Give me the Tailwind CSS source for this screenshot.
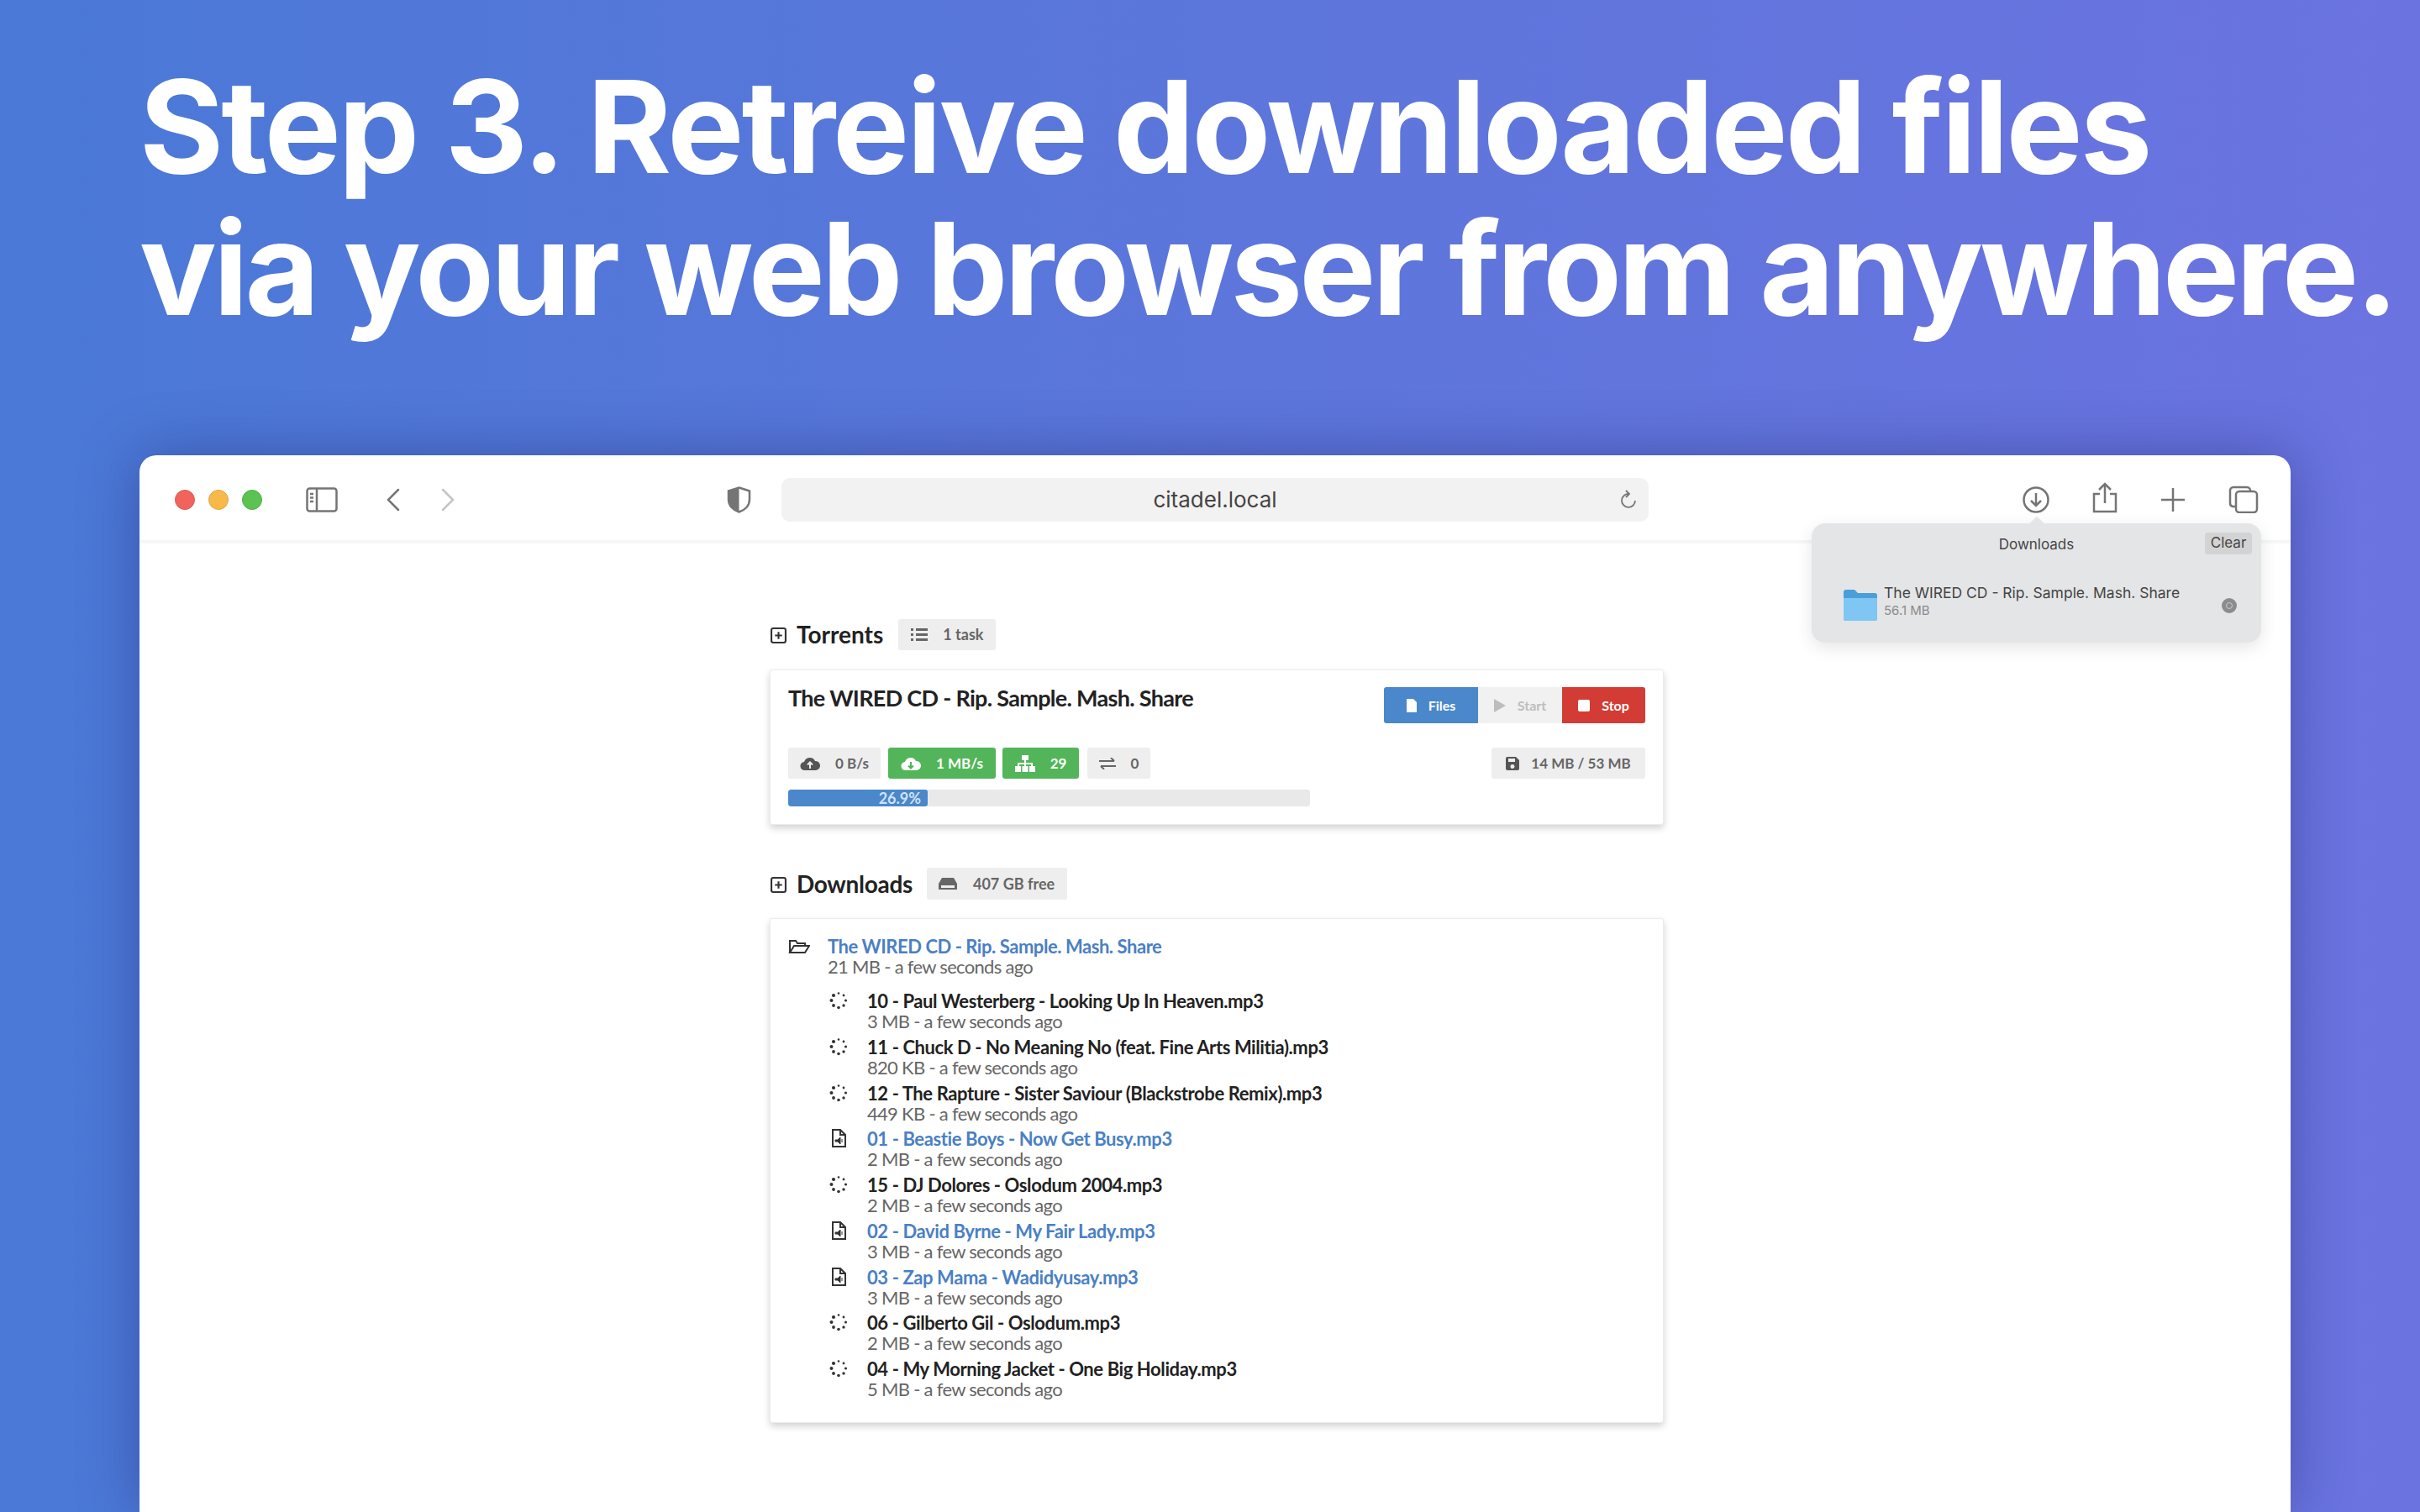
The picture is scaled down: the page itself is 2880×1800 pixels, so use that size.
<!DOCTYPE html>
<html lang="en">
<head>
  <meta charset="UTF-8" />
  <title>Step 3. Retreive downloaded files</title>
  <script src="https://cdn.jsdelivr.net/npm/@tailwindcss/browser@4"></script>
</head>
<body class="w-[2880px] h-[1800px] overflow-hidden bg-gradient-to-r from-[#4a79d7] to-[#6b73e0] font-['Inter',sans-serif]">

  <!-- svg symbols -->
  <svg class="hidden">
    <symbol id="plus-square" viewBox="0 0 18 18"><rect x="1" y="1" width="16" height="16" rx="2" fill="none" stroke="currentColor" stroke-width="2"/><path d="M9 5v8M5 9h8" stroke="currentColor" stroke-width="2"/></symbol>
    <symbol id="spinner" viewBox="0 0 22 22" fill="currentColor">
      <circle cx="11" cy="2.500" r="1.300"/><circle cx="17" cy="5" r="1.400"/><circle cx="19.500" cy="11" r="1.600"/><circle cx="17" cy="17" r="1.700"/>
      <circle cx="11" cy="19.500" r="1.800"/><circle cx="5" cy="17" r="1.900"/><circle cx="2.500" cy="11" r="2"/><circle cx="5" cy="5" r="2.100"/>
    </symbol>
    <symbol id="file-audio" viewBox="0 0 18 22"><path d="M2 1h9l6 6v14H2z" fill="none" stroke="currentColor" stroke-width="2"/><path d="M11 1v6h6" fill="none" stroke="currentColor" stroke-width="2"/><path d="M5 13h3l3-3v8l-3-3H5zM13 12v4" fill="currentColor" stroke="currentColor" stroke-width="1"/></symbol>
    <symbol id="cloud-up" viewBox="0 0 24 18"><path d="M6 17a5 5 0 0 1-1-10 7 7 0 0 1 13-1 5.500 5.500 0 0 1 1 11z" fill="currentColor"/><path d="M12 15V8M9 10.500l3-3 3 3" fill="none" stroke="#eeeeee" stroke-width="2"/></symbol>
    <symbol id="cloud-down" viewBox="0 0 24 18"><path d="M6 17a5 5 0 0 1-1-10 7 7 0 0 1 13-1 5.500 5.500 0 0 1 1 11z" fill="currentColor"/><path d="M12 7v7M9 11.500l3 3 3-3" fill="none" stroke="#52b559" stroke-width="2"/></symbol>
  </svg>

  <h1 class="pl-[166px] pt-[66px] text-white font-bold text-[153px] leading-[169px] tracking-[-3px] whitespace-nowrap">Step 3. Retreive downloaded files<br><span class="tracking-[-3.850px]">via your web browser from anywhere.</span></h1>

  <div class="relative ml-[166px] mt-[138px] w-[2560px] h-[1258px] bg-white rounded-t-[20px] shadow-[0_0_70px_rgba(30,40,110,0.45)]">

    <!-- browser toolbar -->
    <div class="h-[105px] pt-[4px] border-b-[4px] border-[#f6f6f6] flex items-center pl-[42px] pr-[38px] text-[#757575]">
      <div class="flex gap-[16px]">
        <span class="w-[24px] h-[24px] rounded-full bg-[#f1645c] border border-[#dd5b52]"></span>
        <span class="w-[24px] h-[24px] rounded-full bg-[#f6b94a] border border-[#dfa63e]"></span>
        <span class="w-[24px] h-[24px] rounded-full bg-[#5cc353] border border-[#50ad47]"></span>
      </div>
      <svg class="ml-[52px] w-[38px] h-[30px]" viewBox="0 0 38 30" fill="none" stroke="currentColor" stroke-width="2.500"><rect x="1.500" y="1.500" width="35" height="27" rx="3"/><path d="M13 1.500v27M5 8h4M5 12.500h4M5 17h4" /></svg>
      <svg class="ml-[57px] w-[17px] h-[28px]" viewBox="0 0 17 28" fill="none" stroke="currentColor" stroke-width="2.500" stroke-linecap="round"><path d="M15 2L3 14l12 12"/></svg>
      <svg class="ml-[49px] w-[17px] h-[28px] text-[#c4c4c4]" viewBox="0 0 17 28" fill="none" stroke="currentColor" stroke-width="2.500" stroke-linecap="round"><path d="M2 2l12 12L2 26"/></svg>

      <svg class="ml-[323px] w-[29px] h-[32px]" viewBox="0 0 29 32"><path d="M14.500 1.500L27 5.500v10c0 8-6 13-12.500 15C8 28.500 2 23.500 2 15.500v-10z" fill="none" stroke="currentColor" stroke-width="2.500"/><path d="M14.500 1.500L2 5.500v10c0 8 6 13 12.500 15z" fill="currentColor"/></svg>
      <div class="ml-[36px] w-[1032px] h-[52px] rounded-[10px] bg-[#f2f2f2] flex items-center relative">
        <span class="flex-1 text-center text-[26px] text-[#444444]">citadel.local</span>
        <svg class="absolute right-[12px] top-[13px] w-[24px] h-[26px]" viewBox="0 0 24 26" fill="none" stroke="currentColor" stroke-width="1.800"><path d="M13 6a8 8 0 1 0 7 8M9 2l4 4-4 4"/></svg>
      </div>

      <svg class="ml-[445px] w-[32px] h-[32px]" viewBox="0 0 32 32" fill="none" stroke="currentColor" stroke-width="2.500"><circle cx="16" cy="16" r="14.500"/><path d="M16 8v15M10 17l6 6 6-6"/></svg>
      <svg class="ml-[51px] w-[30px] h-[37px] -mt-[4px]" viewBox="0 0 30 37" fill="none" stroke="currentColor" stroke-width="2.500"><path d="M9 14H2v21h26V14h-7M15 25V2M8 9l7-7 7 7"/></svg>
      <svg class="ml-[52px] w-[28px] h-[28px]" viewBox="0 0 28 28" fill="none" stroke="currentColor" stroke-width="2.500"><path d="M14 0v28M0 14h28"/></svg>
      <svg class="ml-[52px] w-[36px] h-[33px]" viewBox="0 0 36 33" fill="none" stroke="currentColor" stroke-width="2.500"><rect x="9" y="7" width="25" height="25" rx="4"/><path d="M9 25H5a4 4 0 0 1-3-4V6a4 4 0 0 1 4-4h16a4 4 0 0 1 4 4v1"/></svg>
    </div>

    <!-- downloads popover -->
    <div class="absolute left-[1990px] top-[81px] w-[535px] h-[142px] rounded-[16px] bg-[#e4e5e7] shadow-[0_6px_20px_rgba(0,0,0,0.1)] text-[#444444]">
      <div class="absolute left-1/2 -translate-x-1/2 -top-[6px] w-[12px] h-[12px] rotate-45 bg-[#e4e5e7]"></div>
      <div class="relative h-[52px] flex items-center justify-center text-[17px]">
        Downloads
        <span class="absolute right-[11px] top-[11px] w-[56px] h-[26px] rounded-[4px] bg-[#d3d3d3] flex items-center justify-center">Clear</span>
      </div>
      <div class="flex items-center pl-[37px] pr-[29px] mt-[26px]">
        <svg class="w-[41px] h-[39px] shrink-0" viewBox="0 0 41 39"><path d="M1 4a3 3 0 0 1 3-3h10l4 4h20a3 3 0 0 1 3 3v27a3 3 0 0 1-3 3H4a3 3 0 0 1-3-3z" fill="#4a9fd8"/><path d="M1 11h40v24a3 3 0 0 1-3 3H4a3 3 0 0 1-3-3z" fill="#7fc6f5"/></svg>
        <div class="ml-[8px] flex-1 -mt-[10px]">
          <div class="text-[17.500px] leading-[22px]">The WIRED CD - Rip. Sample. Mash. Share</div>
          <div class="text-[15px] leading-[20px] text-[#8a8a8a]">56.1 MB</div>
        </div>
        <span class="w-[18px] h-[18px] rounded-full bg-[#8c8c8c] flex items-center justify-center"><span class="w-[8px] h-[8px] rounded-full border border-[#c9c9c9]"></span></span>
      </div>
    </div>

    <!-- page content -->
    <div class="ml-[750px] w-[1064px] pt-[89px] font-['Lato',sans-serif] text-[#333333]">

      <div class="flex items-center h-[38px]">
        <svg class="ml-[1px] w-[19px] h-[19px] text-[#333333] mt-[2px]"><use href="#plus-square"/></svg>
        <span class="ml-[12px] text-[28px] font-bold text-[#222222]">Torrents</span>
        <span class="ml-[18px] h-[37px] w-[116px] rounded-[3px] bg-[#eeeeee] flex items-center pl-[15px] text-[18px] font-bold text-[#666666]">
          <svg class="w-[20px] h-[15px] mr-[18px]" viewBox="0 0 20 15" fill="currentColor"><path d="M0 0h3v3H0zM6 0h14v3H6zM0 6h3v3H0zM6 6h14v3H6zM0 12h3v3H0zM6 12h14v3H6z"/></svg>1 task
        </span>
      </div>

      <div class="mt-[23px] h-[185px] bg-white border border-[#ececec] rounded-[3px] shadow-[0_4px_8px_rgba(0,0,0,0.18)] px-[21px] pt-[18px]">
        <div class="flex justify-between">
          <div class="text-[27px] font-bold text-[#222222] leading-[30px] tracking-[-0.7px]">The WIRED CD - Rip. Sample. Mash. Share</div>
          <div class="flex mt-[2px] h-[43px] text-[16px] font-bold">
            <span class="w-[112px] bg-[#4a87cb] text-white rounded-l-[3px] flex items-center justify-center gap-[14px]">
              <svg class="w-[12px] h-[16px]" viewBox="0 0 12 16" fill="currentColor"><path d="M0 0h8l4 4v12H0z"/></svg>Files</span>
            <span class="w-[100px] bg-[#f1f1f1] text-[#bdbdbd] flex items-center justify-center gap-[14px]">
              <svg class="w-[14px] h-[16px]" viewBox="0 0 14 16" fill="currentColor"><path d="M0 0l14 8-14 8z"/></svg>Start</span>
            <span class="w-[99px] bg-[#d33c34] text-white rounded-r-[3px] flex items-center justify-center gap-[14px]">
              <svg class="w-[14px] h-[14px]" viewBox="0 0 14 14" fill="currentColor"><rect width="14" height="14" rx="2"/></svg>Stop</span>
          </div>
        </div>

        <div class="flex items-center mt-[29px] h-[37px] text-[17px] font-bold text-[#666666]">
          <span class="w-[110px] h-full rounded-[3px] bg-[#eeeeee] flex items-center justify-center gap-[18px]">
            <svg class="w-[24px] h-[18px] text-[#555555]"><use href="#cloud-up"/></svg>0 B/s</span>
          <span class="ml-[9px] w-[128px] h-full rounded-[3px] bg-[#52b559] text-white flex items-center justify-center gap-[18px]">
            <svg class="w-[24px] h-[18px]"><use href="#cloud-down"/></svg>1 MB/s</span>
          <span class="ml-[8px] w-[91px] h-full rounded-[3px] bg-[#52b559] text-white flex items-center justify-center gap-[18px]">
            <svg class="w-[24px] h-[20px]" viewBox="0 0 24 20" fill="currentColor"><path d="M8 0h8v6H8zM11 6h2v3h8v4h-2v-2h-6v2h-2v-2H5v2H3V9h8zM0 13h7v7H0zM8.500 13h7v7h-7zM17 13h7v7h-7z"/></svg>29</span>
          <span class="ml-[10px] w-[75px] h-full rounded-[3px] bg-[#eeeeee] flex items-center justify-center gap-[18px]">
            <svg class="w-[20px] h-[14px]" viewBox="0 0 20 14" fill="none" stroke="currentColor" stroke-width="2"><path d="M0 4h18M14 0l4 4M20 10H2M6 14l-4-4"/></svg>0</span>
          <span class="ml-auto w-[183px] h-full rounded-[3px] bg-[#eeeeee] flex items-center justify-center gap-[14px]">
            <svg class="w-[16px] h-[16px] text-[#555555]" viewBox="0 0 16 16" fill="currentColor"><path d="M0 2a2 2 0 0 1 2-2h10l4 4v10a2 2 0 0 1-2 2H2a2 2 0 0 1-2-2zM3 2v4h8V2zm5 7a2.500 2.500 0 1 0 0 5 2.500 2.500 0 0 0 0-5z"/></svg>14 MB / 53 MB</span>
        </div>

        <div class="mt-[13px] w-[621px] h-[20px] rounded-[3px] bg-[#e9e9e9] overflow-hidden">
          <div class="w-[166px] h-full bg-[#4a87cb] rounded-[3px] text-[#cfe2f7] text-[18px] font-bold leading-[20px] text-right pr-[8px]">26.9%</div>
        </div>
      </div>

      <div class="flex items-center h-[38px] mt-[51px]">
        <svg class="ml-[1px] w-[19px] h-[19px] text-[#333333] mt-[2px]"><use href="#plus-square"/></svg>
        <span class="ml-[12px] text-[28px] font-bold text-[#222222] tracking-[-0.3px]">Downloads</span>
        <span class="ml-[17px] h-[38px] w-[167px] rounded-[3px] bg-[#eeeeee] flex items-center pl-[14px] text-[18px] font-bold text-[#666666]">
          <svg class="w-[22px] h-[14px] mr-[19px]" viewBox="0 0 22 14" fill="currentColor"><path d="M4 0h14l4 7v7H0V7zM3 9v3h16V9z"/></svg>407 GB free
        </span>
      </div>

      <div class="mt-[22px] h-[601px] bg-white border border-[#ececec] rounded-[3px] shadow-[0_4px_8px_rgba(0,0,0,0.18)] pl-[21px] pt-[20px]">
        <div class="flex">
          <svg class="w-[26px] h-[18px] mt-[4px] text-[#333333]" viewBox="0 0 26 18" fill="none" stroke="currentColor" stroke-width="2"><path d="M2 16V2h7l2 3h9v3M2 16l5-8h18l-5 8z"/></svg>
          <div class="ml-[21px] text-[22px] leading-[25px]">
            <div class="font-bold text-[#4a80c4] tracking-[-0.45px]">The WIRED CD - Rip. Sample. Mash. Share</div>
            <div class="-mt-[1px] text-[#666666] tracking-[-0.7px]">21 MB - a few seconds ago</div>
          </div>
        </div>
        <ul id="fileList" class="mt-[16px] ml-[49px]"></ul>
      </div>
    </div>
  </div>

  <script>
    const files = [
      ["10 - Paul Westerberg - Looking Up In Heaven.mp3", "3 MB", false],
      ["11 - Chuck D - No Meaning No (feat. Fine Arts Militia).mp3", "820 KB", false],
      ["12 - The Rapture - Sister Saviour (Blackstrobe Remix).mp3", "449 KB", false],
      ["01 - Beastie Boys - Now Get Busy.mp3", "2 MB", true],
      ["15 - DJ Dolores - Oslodum 2004.mp3", "2 MB", false],
      ["02 - David Byrne - My Fair Lady.mp3", "3 MB", true],
      ["03 - Zap Mama - Wadidyusay.mp3", "3 MB", true],
      ["06 - Gilberto Gil - Oslodum.mp3", "2 MB", false],
      ["04 - My Morning Jacket - One Big Holiday.mp3", "5 MB", false],
    ];

    const list = document.getElementById("fileList");
    files.forEach(([name, size, done]) => {
      const li = document.createElement("li");
      li.className = "flex h-[54.750px] text-[22px] leading-[25px]";
      li.innerHTML = `
        <svg class="w-[22px] h-[22px] mt-[1px] text-[#333333]"><use href="${done ? "#file-audio" : "#spinner"}"/></svg>
        <div class="ml-[23px]">
          <div class="font-bold tracking-[-0.4px] ${done ? "text-[#4a80c4]" : "text-[#222222]"}">${name}</div>
          <div class="-mt-[1px] text-[#666666] tracking-[-0.7px]">${size} - a few seconds ago</div>
        </div>`;
      list.appendChild(li);
    });
  </script>
</body>
</html>
